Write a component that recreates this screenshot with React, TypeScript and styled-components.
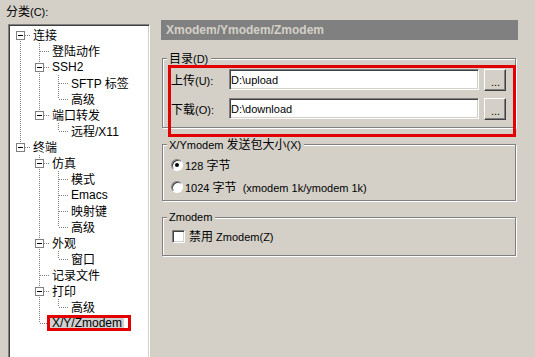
import React from 'react';
import { styled, createGlobalStyle } from 'styled-components';

type TreeNode = { label: string; children?: TreeNode[]; selected?: boolean };

const tree: TreeNode[] = [
  {
    label: '连接',
    children: [
      { label: '登陆动作' },
      { label: 'SSH2', children: [{ label: 'SFTP 标签' }, { label: '高级' }] },
      { label: '端口转发', children: [{ label: '远程/X11' }] },
    ],
  },
  {
    label: '终端',
    children: [
      { label: '仿真', children: [{ label: '模式' }, { label: 'Emacs' }, { label: '映射键' }, { label: '高级' }] },
      { label: '外观', children: [{ label: '窗口' }] },
      { label: '记录文件' },
      { label: '打印', children: [{ label: '高级' }] },
      { label: 'X/Y/Zmodem', selected: true },
    ],
  },
];

// wrap CJK runs so they get their own (slightly larger) size
const mixed = (s: string) =>
  s.split(/([\u3400-\u9fff]+)/).map((p, i) =>
    /[\u3400-\u9fff]/.test(p) ? <Han key={i}>{p}</Han> : <React.Fragment key={i}>{p}</React.Fragment>
  );

function TreeItem({ node, root, first, last }: { node: TreeNode; root: boolean; first: boolean; last: boolean }) {
  return (
    <Item $root={root} $first={first} $last={last}>
      <Row>
        {node.children && <Toggle />}
        <NodeLabel $selected={!!node.selected}>{mixed(node.label)}</NodeLabel>
        {node.selected && <Mark />}
      </Row>
      {node.children && (
        <Branch $nested>
          {node.children.map((c, i) => (
            <TreeItem key={i} node={c} root={false} first={i === 0} last={i === node.children!.length - 1} />
          ))}
        </Branch>
      )}
    </Item>
  );
}

export default function App() {
  return (
    <Page>
      <GlobalStyle />
      <Side>
        <SideTitle>{mixed('分类(C):')}</SideTitle>
        <TreeBox>
          <Branch $nested={false}>
            {tree.map((n, i) => (
              <TreeItem key={i} node={n} root first={i === 0} last={i === tree.length - 1} />
            ))}
          </Branch>
        </TreeBox>
      </Side>
      <Panel>
        <Header>Xmodem/Ymodem/Zmodem</Header>

        <Group $top={11}>
          <Legend>{mixed('目录(D)')}</Legend>
          <GroupBody $pad="4px 0 7px 8px" $gap={7}>
            <PathRow>
              <FieldLabel>{mixed('上传(U):')}</FieldLabel>
              <PathInput readOnly value={'D:\\upload'} />
              <Browse>...</Browse>
            </PathRow>
            <PathRow>
              <FieldLabel>{mixed('下载(O):')}</FieldLabel>
              <PathInput readOnly value={'D:\\download'} />
              <Browse>...</Browse>
            </PathRow>
            <Highlight />
          </GroupBody>
        </Group>

        <Group $top={9}>
          <Legend>{mixed('X/Ymodem 发送包大小(X)')}</Legend>
          <GroupBody $pad="3px 0 2px 8px" $gap={0}>
            <OptionRow>
              <Radio $checked />
              <OptionText>{mixed('128 字节')}</OptionText>
            </OptionRow>
            <OptionRow>
              <Radio $checked={false} />
              <OptionText>{mixed('1024 字节  (xmodem 1k/ymodem 1k)')}</OptionText>
            </OptionRow>
          </GroupBody>
        </Group>

        <Group $top={9}>
          <Legend>Zmodem</Legend>
          <GroupBody $pad="2px 0 9px 9px" $gap={0}>
            <CheckRow>
              <Check />
              <OptionText>{mixed('禁用 Zmodem(Z)')}</OptionText>
            </CheckRow>
          </GroupBody>
        </Group>
      </Panel>
    </Page>
  );
}

const GlobalStyle = createGlobalStyle`
  html, body {
    margin: 0;
    background: #d4d0c8;
    overflow: hidden;
  }
  body {
    font-family: "Liberation Sans", "Noto Sans CJK SC", sans-serif;
    font-size: 11px;
    line-height: 14px;
    color: #000;
  }
`;

const Han = styled.span`
  font-family: "Noto Sans CJK SC", sans-serif;
  font-size: 12px;
`;

const Page = styled.div`
  display: flex;
  width: 535px;
  height: 357px;
  overflow: hidden;
`;

const Side = styled.div`
  width: 150px;
  flex: none;
`;

const SideTitle = styled.div`
  height: 16px;
  margin: 3px 0 5px 6px;
  line-height: 16px;
`;

const TreeBox = styled.div`
  margin-left: 8px;
  width: 142px;
  height: 345px;
  box-sizing: border-box;
  background: #fff;
  border: 1px solid;
  border-color: #808080 #fff #fff #808080;
  box-shadow: inset 1px 1px #404040, inset -1px -1px #d4d0c8;
  padding: 2px 0 0 1px;
  font-size: 12px;
`;

const Branch = styled.ul<{ $nested: boolean }>`
  list-style: none;
  margin: 0;
  padding: 0 0 0 ${(p) => (p.$nested ? 19 : 0)}px;
`;

const dotsV = `linear-gradient(to bottom, #808080 50%, transparent 50%) 0 0 / 1px 2px`;
const dotsH = `linear-gradient(to right, #808080 50%, transparent 50%) 0 0 / 2px 1px`;

const Item = styled.li<{ $root: boolean; $first: boolean; $last: boolean }>`
  position: relative;

  &::before {
    content: '';
    position: absolute;
    left: 10px;
    width: 1px;
    top: ${(p) => (p.$root && p.$first ? 8 : 0)}px;
    ${(p) => (p.$last ? 'height: 8px;' : 'bottom: 0;')}
    background: ${dotsV};
  }
`;

const Row = styled.div`
  position: relative;
  height: 16px;
  display: flex;
  align-items: center;
  padding-left: 23px;

  &::before {
    content: '';
    position: absolute;
    left: 11px;
    top: 8px;
    width: 10px;
    height: 1px;
    background: ${dotsH};
  }
`;

const Toggle = styled.span`
  position: absolute;
  left: 6px;
  top: 4px;
  width: 9px;
  height: 9px;
  box-sizing: border-box;
  border: 1px solid #808080;
  background: #fff;
  z-index: 1;

  &::after {
    content: '';
    position: absolute;
    left: 1px;
    top: 3px;
    width: 5px;
    height: 1px;
    background: #000;
  }
`;

const NodeLabel = styled.span<{ $selected: boolean }>`
  white-space: nowrap;
  line-height: 13px;
  padding: 0 2px;
  margin-left: -2px;
  background: ${(p) => (p.$selected ? '#d0d0d0' : 'transparent')};
`;

const Mark = styled.span`
  position: absolute;
  left: 18px;
  top: 0;
  width: 84px;
  height: 16px;
  box-sizing: border-box;
  border: 3px solid #e30000;
`;

const Panel = styled.div`
  width: 357px;
  margin-left: 11px;
  padding-top: 20px;
`;

const Header = styled.div`
  height: 20px;
  display: flex;
  align-items: center;
  padding-left: 5px;
  background: #808080;
  color: #d4d0c8;
  font-weight: bold;
  font-size: 12px;
`;

const Group = styled.fieldset<{ $top: number }>`
  margin: ${(p) => p.$top}px 0 0 1px;
  width: 354px;
  box-sizing: border-box;
  min-width: 0;
  padding: 0;
  border: 1px solid #808080;
  box-shadow: inset 1px 1px #fff, 1px 1px #fff;
`;

const Legend = styled.legend`
  margin-left: 4px;
  padding: 0 3px 0 2px;
  height: 14px;
  line-height: 14px;
  background: #d4d0c8;
  white-space: pre;
`;

const GroupBody = styled.div<{ $pad: string; $gap: number }>`
  position: relative;
  display: flex;
  flex-direction: column;
  gap: ${(p) => p.$gap}px;
  padding: ${(p) => p.$pad};
`;

const PathRow = styled.div`
  display: flex;
  align-items: center;
  height: 22px;
`;

const FieldLabel = styled.span`
  width: 58px;
  flex: none;
`;

const PathInput = styled.input`
  width: 250px;
  height: 21px;
  box-sizing: border-box;
  margin: 0 0 1px;
  padding: 0 0 0 1px;
  border: 1px solid;
  border-color: #808080 #fff #fff #808080;
  box-shadow: inset 1px 1px #404040, inset -1px -1px #d4d0c8;
  background: #fff;
  font-family: "Liberation Sans", sans-serif;
  font-size: 11px;
  color: #000;
  outline: none;
`;

const Browse = styled.button`
  width: 22px;
  height: 22px;
  margin-left: 5px;
  padding: 0 0 0 1px;
  box-sizing: border-box;
  border: 1px solid;
  border-color: #fff #404040 #404040 #fff;
  box-shadow: inset -1px -1px #808080;
  background: #d4d0c8;
  font-family: "Liberation Sans", sans-serif;
  font-size: 11px;
  line-height: 24px;
  color: #000;
`;

const Highlight = styled.div`
  position: absolute;
  left: 5px;
  top: 0;
  width: 348px;
  height: 72px;
  box-sizing: border-box;
  border: 3px solid #e30000;
`;

const OptionRow = styled.div`
  display: flex;
  align-items: center;
  gap: 2px;
  height: 22px;
`;

const CheckRow = styled.div`
  display: flex;
  align-items: center;
  gap: 4px;
  height: 20px;
`;

const OptionText = styled.span`
  white-space: pre;
`;

const Radio = styled.span<{ $checked: boolean }>`
  position: relative;
  width: 12px;
  height: 12px;
  box-sizing: border-box;
  border-radius: 50%;
  border: 1px solid;
  border-color: #808080 #fff #fff #808080;
  box-shadow: inset 1px 1px #404040;
  background: #fff;

  &::after {
    content: '';
    display: ${(p) => (p.$checked ? 'block' : 'none')};
    position: absolute;
    left: 3px;
    top: 3px;
    width: 4px;
    height: 4px;
    border-radius: 50%;
    background: #000;
  }
`;

const Check = styled.span`
  width: 13px;
  height: 13px;
  box-sizing: border-box;
  border: 1px solid;
  border-color: #808080 #fff #fff #808080;
  box-shadow: inset 1px 1px #404040, inset -1px -1px #d4d0c8;
  background: #fff;
`;
